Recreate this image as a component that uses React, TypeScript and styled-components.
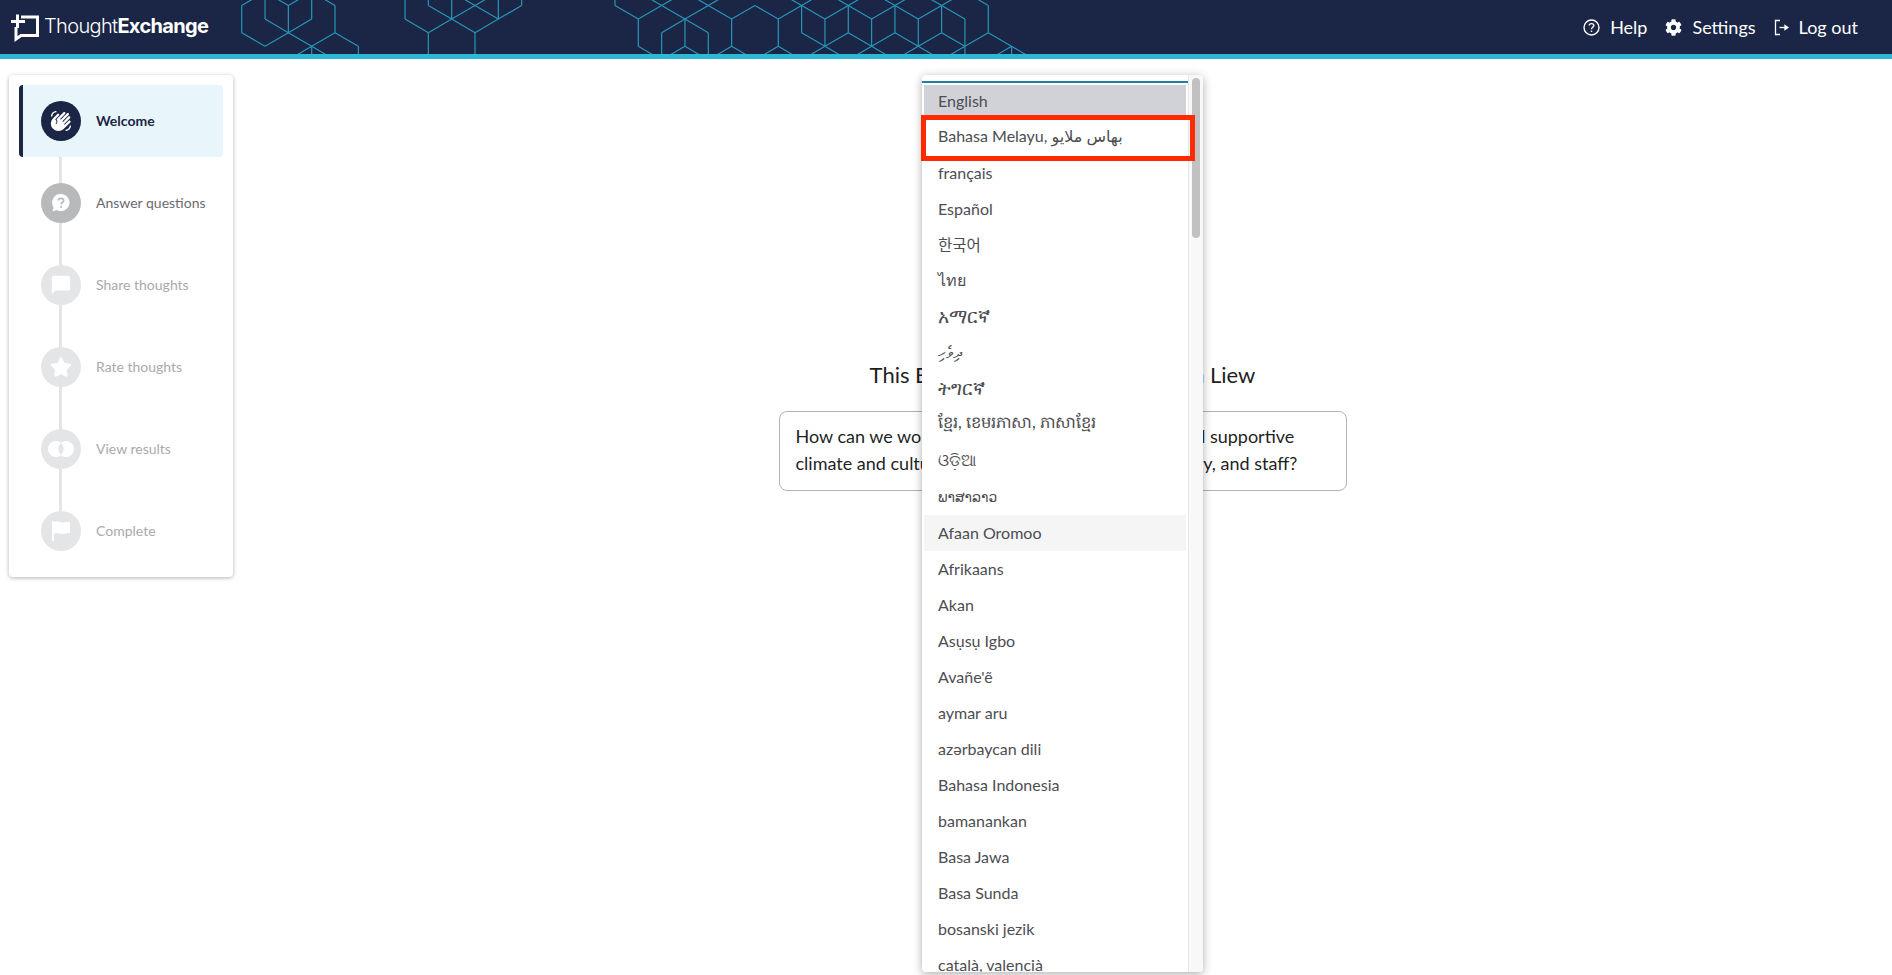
import styled, { createGlobalStyle } from "styled-components";
import { FaCog, FaStar } from "react-icons/fa";
import { MdChatBubble, MdWavingHand } from "react-icons/md";
import { ReactNode } from "react";

const GlobalStyle = createGlobalStyle`
  html, body { margin: 0; padding: 0; background: #fff; }
  body { font-family: Lato, "Noto Sans", "DejaVu Sans", "Noto Sans CJK KR", sans-serif; overflow: hidden; }
  * { box-sizing: border-box; }
`;

const Page = styled.div`
  position: relative;
  width: 1892px;
  height: 975px;
  overflow: hidden;
`;

const Header = styled.header`
  position: relative;
  height: 59px;
  background: #1b2545;
  border-bottom: 5px solid #2fb8d6;
  display: flex;
  align-items: center;
  justify-content: space-between;
  padding: 0 34px 0 10px;
`;

const HexLayer = styled.svg`
  position: absolute;
  left: 0;
  top: 0;
  width: 1100px;
  height: 54px;
  fill: none;
  stroke: #29a3c4;
  stroke-width: 1.2;
  opacity: 0.9;
`;

const Logo = styled.div`
  position: relative;
  display: flex;
  align-items: center;
  gap: 5px;
  color: #fff;
  font-family: Inter, sans-serif;
  font-size: 20px;
  letter-spacing: -0.65px;
  font-weight: 300;
  span { margin-bottom: 2px; }
  b { font-weight: 700; }
`;

const Nav = styled.nav`
  position: relative;
  display: flex;
  align-items: center;
  gap: 18px;
`;

const NavItem = styled.a`
  display: flex;
  align-items: center;
  gap: 10px;
  color: #fff;
  font-size: 18px;
`;

const Body = styled.div`
  display: flex;
  align-items: flex-start;
`;

const Sidebar = styled.aside`
  width: 224px;
  margin: 16px 0 0 9px;
  padding: 10px;
  background: #fff;
  border-radius: 4px;
  box-shadow: 0 1px 4px rgba(0, 0, 0, 0.3);
  display: flex;
  flex-direction: column;
  gap: 10px;
`;

const Step = styled.div<{ $active?: boolean; $last?: boolean }>`
  position: relative;
  height: 72px;
  display: flex;
  align-items: center;
  gap: 15px;
  padding-left: ${(p) => (p.$active ? "18px" : "22px")};
  border-left: ${(p) => (p.$active ? "4px solid #1b2545" : "none")};
  border-radius: 4px;
  background: ${(p) => (p.$active ? "#e8f6fc" : "transparent")};
  &::after {
    content: "";
    display: ${(p) => (p.$last ? "none" : "block")};
    position: absolute;
    left: ${(p) => (p.$active ? "36px" : "40px")};
    top: 72px;
    width: 3px;
    height: 10px;
    background: #e4e5e7;
  }
  &::before {
    content: "";
    display: ${(p) => (p.$active ? "none" : "block")};
    position: absolute;
    left: 40px;
    top: 0;
    bottom: ${(p) => (p.$last ? "36px" : "0")};
    width: 3px;
    background: #e4e5e7;
  }
`;

const StepCircle = styled.div<{ $tone: string }>`
  position: relative;
  z-index: 1;
  width: 40px;
  height: 40px;
  border-radius: 50%;
  flex: none;
  display: flex;
  align-items: center;
  justify-content: center;
  color: #fff;
  background: ${(p) => p.$tone};
`;

const StepLabel = styled.span<{ $tone: string; $active?: boolean }>`
  margin-bottom: 2px;
  font-size: 14px;
  color: ${(p) => p.$tone};
  font-weight: ${(p) => (p.$active ? 700 : 400)};
`;

const Main = styled.main`
  flex: 1;
  padding-top: 302px;
  display: flex;
  flex-direction: column;
  align-items: center;
`;

const Title = styled.h1`
  margin: 0 0 22px;
  font-size: 22px;
  line-height: 28px;
  font-weight: 400;
  color: #1f1f1f;
`;

const QuestionBox = styled.div`
  width: 568px;
  height: 80px;
  padding: 11px 16px;
  border: 1px solid #b4b4b4;
  border-radius: 8px;
  font-size: 18px;
  line-height: 27px;
  color: #1f1f1f;
`;

const Dropdown = styled.div`
  position: absolute;
  left: 922px;
  top: 75px;
  width: 281px;
  height: 897px;
  display: flex;
  overflow: hidden;
  background: #fff;
  border-radius: 4px;
  box-shadow: 0 2px 10px rgba(0, 0, 0, 0.32);
`;

const LangList = styled.ul`
  list-style: none;
  margin: 6px 0 0;
  padding: 0;
  width: 266px;
  border-top: 2px solid #1f7f9e;
`;

const LangItem = styled.li<{ $state?: "selected" | "hover" | "focus"; $size?: number }>`
  height: 36px;
  margin: 0 2px;
  padding: 0 0 2px 14px;
  display: flex;
  align-items: center;
  font-size: ${(p) => p.$size ?? 16}px;
  color: #4d4d52;
  white-space: nowrap;
  background-clip: padding-box;
  background-color: ${(p) =>
    p.$state === "selected" ? "#d1d2d7" : p.$state === "hover" ? "#f5f5f5" : "#fff"};
  ${(p) => p.$state === "selected" && "border-top: 2px solid transparent; padding-bottom: 4px;"}
  ${(p) => p.$state === "focus" && "border-top: 1px solid #1f7f9e; padding-bottom: 3px;"}
`;

const ScrollTrack = styled.div`
  flex: 1;
  padding: 3px 3px 0;
  background: #f8f8f8;
  border-left: 1px solid #e8e8e8;
`;

const ScrollThumb = styled.div`
  height: 160px;
  border-radius: 4px;
  background: #c1c1c1;
`;

const Highlight = styled.div`
  position: absolute;
  left: 921px;
  top: 115px;
  width: 274px;
  height: 46px;
  border: 5px solid #ff2a00;
`;

// hex lattice: 23.33px per column, 13.6px per row
const hexSegments: number[][] = [
  [0, 0, 0, 2], [0, 2, 1, 3], [1, 3, 2, 2], [2, 2, 3, 1], [0, 0, 1, -1], [1, 1, 1, -1], [1, 1, 2, 2],
  [2, 0, 2, 2], [2, 0, 1, -1], [2, 0, 3, -1], [3, 1, 3, -1], [2, 2, 3, 3], [3, 3, 4, 4], [3, 3, 4, 2],
  [4, 2, 5, 3], [5, 3, 5, 4], [4, 2, 4, 0], [4, 0, 3, -1], [3, 3, 3, 4], [3, 3, 2, 4],
  [7, -1, 7, 1], [7, 1, 8, 2], [8, 2, 9, 1], [9, 1, 10, 2], [10, 2, 11, 1], [11, 1, 12, 0], [8, 2, 8, 4],
  [10, 2, 10, 4], [8, -1, 8, 0], [8, 0, 9, 1], [9, -1, 9, 1], [9, 1, 10, 0], [10, 0, 11, 1], [10, 0, 9, -1],
  [10, 0, 11, -1], [11, -1, 11, 1], [12, 0, 12, -1],
  [16, -1, 16, 0], [16, 0, 17, 1], [17, 1, 17, 3], [17, 3, 18, 4], [17, 1, 18, 0], [18, 0, 19, 1],
  [19, 1, 20, 0], [20, 0, 21, 1], [21, 1, 22, 0], [22, 0, 23, 1], [23, 1, 24, 0], [24, 0, 25, 1],
  [19, 1, 19, 3], [18, 2, 19, 1], [19, 1, 20, 2], [20, 2, 20, 4], [18, 2, 18, 4], [19, 3, 18, 4], [19, 3, 20, 4],
  [21, 1, 21, 3], [21, 3, 20, 4], [21, 3, 22, 4], [23, 1, 23, 3], [23, 3, 22, 4], [23, 3, 24, 4],
  [18, 0, 17, -1], [18, 0, 19, -1], [20, 0, 19, -1], [20, 0, 21, -1], [24, 0, 23, -1], [24, 0, 25, -1],
  [24, 0, 24, 2], [24, 2, 25, 3], [25, 3, 26, 4], [25, 3, 24, 4], [25, 1, 25, 3], [25, 1, 26, 0], [26, 0, 26, 2],
  [26, 2, 25, 3], [26, 2, 27, 3], [26, 0, 27, 1], [27, 1, 28, 0], [27, 1, 27, 3], [27, 3, 26, 4], [27, 3, 28, 4],
  [28, 0, 28, 2], [28, 2, 27, 3], [28, 2, 29, 3], [28, 0, 29, 1], [29, 1, 30, 0], [29, 1, 29, 3], [29, 3, 28, 4],
  [29, 3, 30, 4], [30, 0, 30, 2], [30, 2, 29, 3], [30, 2, 31, 3], [30, 0, 31, 1], [31, 1, 31, 4], [31, 3, 30, 4],
  [31, 3, 32, 2], [32, 2, 33, 3], [33, 3, 34, 4], [32, 0, 32, 2], [32, 0, 31, -1], [33, 3, 33, 4], [33, 3, 32, 4],
  [26, 0, 25, -1], [26, 0, 27, -1], [28, 0, 27, -1], [28, 0, 29, -1], [30, 0, 29, -1], [30, 0, 31, -1],
];

const hexX = (c: number) => 241.7 + c * 23.33;
const hexY = (r: number) => 5.5 + r * 13.6;

const HexPattern = () => (
  <HexLayer viewBox="0 0 1100 54">
    {hexSegments.map(([a, b, c, d], i) => (
      <line key={i} x1={hexX(a)} y1={hexY(b)} x2={hexX(c)} y2={hexY(d)} />
    ))}
  </HexLayer>
);

const LogoMark = () => (
  <svg width="29" height="29" viewBox="0 0 29 29" fill="none" stroke="#fff" strokeWidth="3">
    <path d="M11 4 H27.5 V22.5 H11 L6 26 V14" />
    <path d="M1 8.5 H15 M7.5 1.5 V15" />
  </svg>
);

const HelpIcon = () => (
  <svg width="17" height="17" viewBox="0 0 17 17" fill="none" stroke="#fff" strokeWidth="1.4">
    <circle cx="8.5" cy="8.5" r="7.5" />
    <path d="M6.2 6.6 C6.2 3.9 10.8 3.9 10.8 6.6 C10.8 8.3 8.5 8.3 8.5 10.2" />
    <path d="M8.5 11.6 V13" />
  </svg>
);

const LogoutIcon = () => (
  <svg width="15" height="17" viewBox="0 0 15 17" fill="none" stroke="#fff" strokeWidth="1.3">
    <path d="M6 1.5 H1.5 V15.5 H6" />
    <path d="M5.5 8.5 H12" />
    <path d="M11 6.5 L14 8.5 L11 10.5 Z" fill="#fff" />
  </svg>
);

const QuestionBubble = () => (
  <svg width="20" height="20" viewBox="0 0 20 20">
    <path d="M10 1 A8.6 8.6 0 1 1 5.5 17 L1.5 18.6 L2.6 14.4 A8.6 8.6 0 0 1 10 1 Z" fill="#fff" />
    <path d="M7.3 7.6 C7.3 4.6 12.7 4.6 12.7 7.6 C12.7 9.6 10 9.4 10 11.6" fill="none" stroke="#b8b9bb" strokeWidth="1.7" />
    <circle cx="10" cy="14" r="1.1" fill="#b8b9bb" />
  </svg>
);

const VennIcon = () => (
  <svg width="28" height="16" viewBox="0 0 28 16">
    <circle cx="9" cy="8" r="8" fill="#fff" />
    <circle cx="19" cy="8" r="8" fill="#fff" />
    <path d="M14 2 A8 8 0 0 1 14 14 A8 8 0 0 1 14 2 Z" fill="#e4e5e7" />
  </svg>
);

const FlagIcon = () => (
  <svg width="20" height="22" viewBox="0 0 20 22" fill="#fff">
    <path d="M1 1 H3 V21 H1 Z" />
    <path d="M3 2 C7 0 9 3 12 2.5 C14 2.2 17 1.6 19 1.5 V13 C16 13.2 14 14 11 14 C8 14 6 12 3 14 Z" />
  </svg>
);

type StepData = { label: string; icon: ReactNode; circle: string; text: string };

const steps: StepData[] = [
  { label: "Welcome", icon: <MdWavingHand size={22} />, circle: "#1b2545", text: "#1b2545" },
  { label: "Answer questions", icon: <QuestionBubble />, circle: "#b8b9bb", text: "#6b6b6f" },
  { label: "Share thoughts", icon: <MdChatBubble size={22} />, circle: "#e4e5e7", text: "#a9a9ac" },
  { label: "Rate thoughts", icon: <FaStar size={22} />, circle: "#e4e5e7", text: "#a9a9ac" },
  { label: "View results", icon: <VennIcon />, circle: "#e4e5e7", text: "#a9a9ac" },
  { label: "Complete", icon: <FlagIcon />, circle: "#e4e5e7", text: "#a9a9ac" },
];

type Language = { name: string; size?: number };

const languages: Language[] = [
  { name: "English" },
  { name: "Bahasa Melayu, بهاس ملايو" },
  { name: "français" },
  { name: "Español" },
  { name: "한국어", size: 15.5 },
  { name: "ไทย" },
  { name: "አማርኛ", size: 18.5 },
  { name: "ދިވެހި" },
  { name: "ትግርኛ", size: 18.5 },
  { name: "ខ្មែរ, ខេមរភាសា, ភាសាខ្មែរ", size: 16.4 },
  { name: "ଓଡ଼ିଆ" },
  { name: "ພາສາລາວ", size: 13.8 },
  { name: "Afaan Oromoo" },
  { name: "Afrikaans" },
  { name: "Akan" },
  { name: "Asụsụ Igbo" },
  { name: "Avañe'ẽ" },
  { name: "aymar aru" },
  { name: "azərbaycan dili" },
  { name: "Bahasa Indonesia" },
  { name: "bamanankan" },
  { name: "Basa Jawa" },
  { name: "Basa Sunda" },
  { name: "bosanski jezik" },
  { name: "català, valencià" },
];

const langState = (i: number) => {
  if (i === 0) return "selected";
  if (i === 1) return "focus";
  if (i === 12) return "hover";
  return undefined;
};

export default function App() {
  return (
    <Page>
      <GlobalStyle />
      <Header>
        <HexPattern />
        <Logo>
          <LogoMark />
          <span>
            Thought<b>Exchange</b>
          </span>
        </Logo>
        <Nav>
          <NavItem>
            <HelpIcon />
            Help
          </NavItem>
          <NavItem>
            <FaCog size={17} />
            Settings
          </NavItem>
          <NavItem>
            <LogoutIcon />
            Log out
          </NavItem>
        </Nav>
      </Header>
      <Body>
        <Sidebar>
          {steps.map((s, i) => (
            <Step key={s.label} $active={i === 0} $last={i === steps.length - 1}>
              <StepCircle $tone={s.circle}>{s.icon}</StepCircle>
              <StepLabel $tone={s.text} $active={i === 0}>
                {s.label}
              </StepLabel>
            </Step>
          ))}
        </Sidebar>
        <Main>
          <Title>This Exchange was created by Alan Liew</Title>
          <QuestionBox>
            How can we work together to create a healthful and supportive
            <br />
            climate and culture for our students, mentors, faculty, and staff?
          </QuestionBox>
        </Main>
      </Body>
      <Dropdown>
        <LangList>
          {languages.map((lang, i) => (
            <LangItem key={lang.name} $state={langState(i)} $size={lang.size}>
              {lang.name}
            </LangItem>
          ))}
        </LangList>
        <ScrollTrack>
          <ScrollThumb />
        </ScrollTrack>
      </Dropdown>
      <Highlight />
    </Page>
  );
}
